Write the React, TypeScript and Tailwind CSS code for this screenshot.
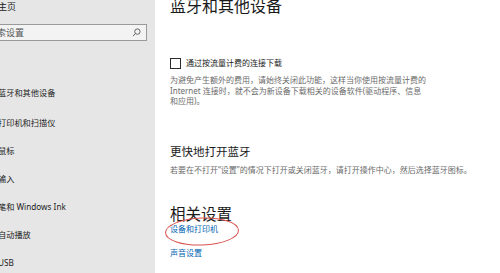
import React from "react";

const navItems = ["蓝牙和其他设备", "打印机和扫描仪", "鼠标", "输入", "笔和 Windows Ink", "自动播放", "USB"];

const font = { fontFamily: '"Noto Sans", "Noto Sans CJK SC", sans-serif' };

const App: React.FC = () => {
    return (
        <div className="flex h-[273px] w-[500px] overflow-hidden bg-white text-[#1a1a1a]" style={font}>
            {/* Sidebar */}
            <div className="w-[155px] shrink-0 overflow-hidden bg-[#e6e6e6]">
                <div className="ml-[-2px] mt-[1px] h-[12px] text-[9px] leading-[12px]">主页</div>
                <div className="ml-[-2px] mt-[11px] flex h-[17px] w-[149px] items-center justify-between border border-[#9a9a9a] bg-[#f3f3f3] pr-[5px]">
                    <span className="ml-[-2px] text-[9px] leading-[12px] text-[#555]">索设置</span>
                    <svg width="9" height="9" viewBox="0 0 10 10" fill="none" stroke="#555" strokeWidth="1">
                        <circle cx="6" cy="4" r="3" />
                        <path d="M3.8 6.2 L1 9" />
                    </svg>
                </div>
                <div className="ml-[-2px] mt-[46px] flex flex-col gap-[16px]">
                    {navItems.map((item, i) => (
                        <div key={item} className={`h-[12px] whitespace-nowrap text-[8.2px] leading-[12px] text-[#222] ${i === 0 ? "mb-[2px]" : ""}`}>
                            {item}
                        </div>
                    ))}
                </div>
            </div>

            {/* Main */}
            <div className="relative flex-1 pl-[15px]">
                <div className="mt-[-2px] h-[16px] text-[16px] leading-[16px]">蓝牙和其他设备</div>

                <div className="mt-[43px] flex h-[12px] items-center gap-[5px]">
                    <div className="h-[11px] w-[11px] border-[1.5px] border-[#2b2b2b]" />
                    <span className="text-[8px] leading-[12px]">通过按流量计费的连接下载</span>
                </div>

                <p className="mt-[6px] whitespace-nowrap text-[8px] leading-[10.5px] text-[#6b6b6b]">
                    为避免产生额外的费用，请始终关闭此功能，这样当你使用按流量计费的
                    <br />
                    Internet 连接时，就不会为新设备下载相关的设备软件(驱动程序、信息
                    <br />
                    和应用)。
                </p>

                <div className="mt-[38px] h-[14px] text-[11.5px] leading-[14px]">更快地打开蓝牙</div>
                <p className="mt-[6px] h-[10px] whitespace-nowrap text-[8px] leading-[10px] text-[#6b6b6b]">
                    若要在不打开“设置”的情况下打开或关闭蓝牙，请打开操作中心，然后选择蓝牙图标。
                </p>

                <div className="mt-[31px] h-[16px] text-[15.5px] leading-[16px]">相关设置</div>
                <div className="mt-[2px] h-[10px] text-[8px] leading-[10px] text-[#0063b1]">设备和打印机</div>
                <div className="mt-[14px] h-[10px] text-[8px] leading-[10px] text-[#0063b1]">声音设置</div>
                <div className="mt-[14px] h-[10px] text-[8px] leading-[10px] text-[#0063b1]">显示设置</div>

                {/* Annotation circle */}
                <svg className="absolute left-[9px] top-[216px]" width="76" height="31" viewBox="0 0 76 31" fill="none">
                    <ellipse cx="38" cy="15.5" rx="36.5" ry="13.5" stroke="#d9534f" strokeWidth="1" transform="rotate(-2 38 15.5)" />
                </svg>
            </div>
        </div>
    );
};

export default App;
